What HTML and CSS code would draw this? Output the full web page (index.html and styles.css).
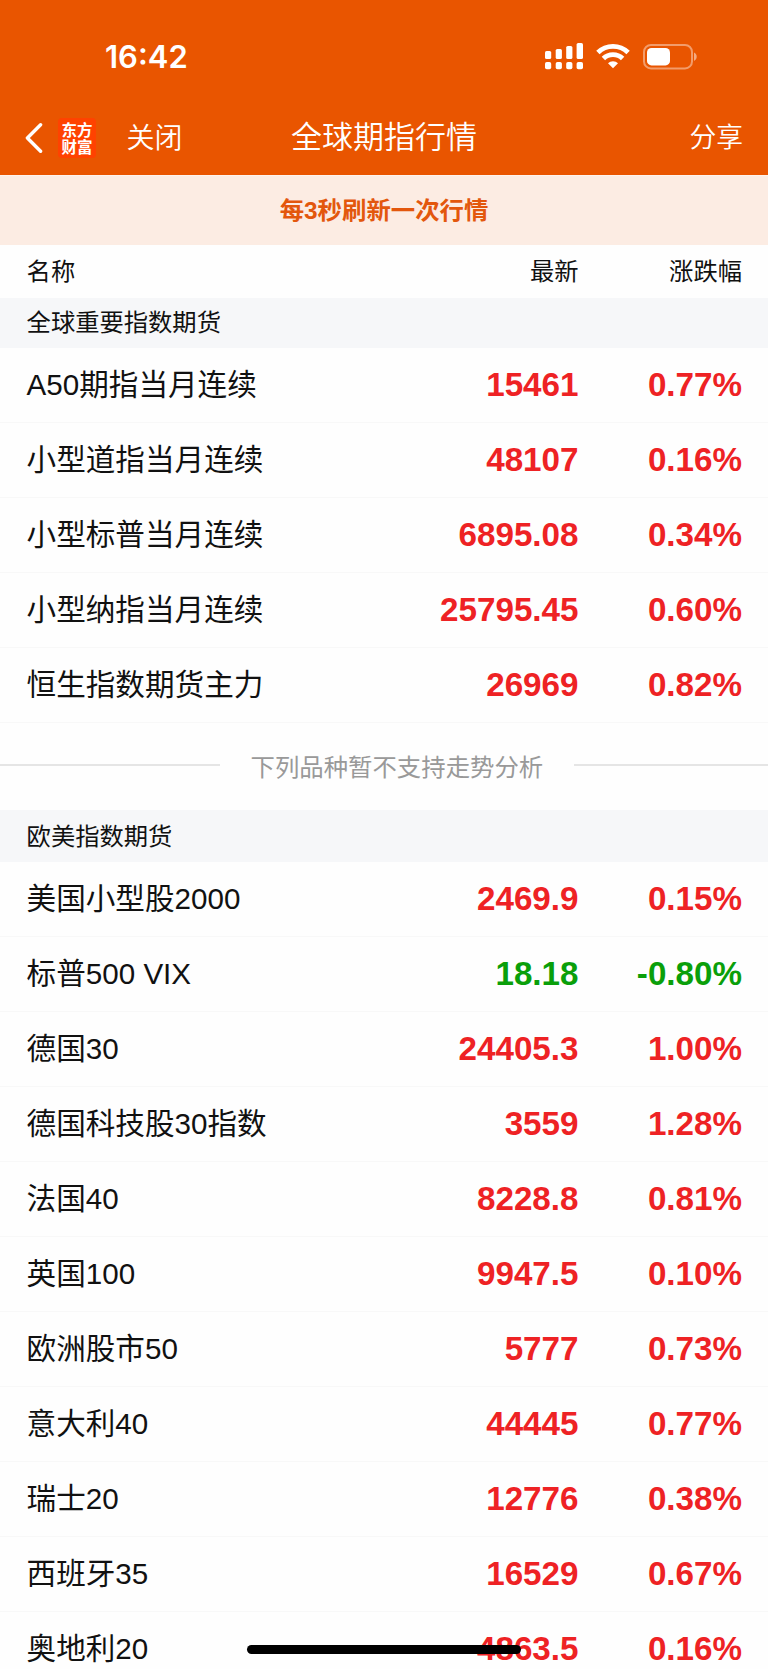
FILE: index.html
```html
<!DOCTYPE html>
<html lang="zh-CN">
<head>
    <meta charset="UTF-8">
    <meta name="viewport" content="width=device-width, initial-scale=1.0">
    <title>全球期指行情</title>
    <link rel="stylesheet" href="styles.css">
</head>
<body>
    <div class="page">
        <header class="header">
            <div class="status-bar">
                <div class="time">16:42</div>
                <div class="status-icons">
                    <svg class="signal" width="40" height="28" viewBox="0 0 40 28" fill="#fff">
                        <rect x="1" y="9" width="6.2" height="8" rx="1.6"/>
                        <rect x="11.7" y="7" width="6.2" height="10" rx="1.6"/>
                        <rect x="22.2" y="4" width="6.2" height="13" rx="1.6"/>
                        <rect x="32.6" y="1" width="6.4" height="16" rx="1.6"/>
                        <rect x="1" y="20" width="6.2" height="7.3" rx="1.8"/>
                        <rect x="11.7" y="20" width="6.2" height="7.3" rx="1.8"/>
                        <rect x="22.2" y="20" width="6.2" height="7.3" rx="1.8"/>
                        <rect x="32.6" y="20" width="6.4" height="7.3" rx="1.8"/>
                    </svg>
                    <svg class="wifi" width="34" height="26" viewBox="0 0 34 26">
                        <g fill="none" stroke="#fff" stroke-width="4.8">
                            <path d="M1.9 9.5a21.6 21.6 0 0 1 30.2 0"/>
                            <path d="M7.4 15.5a13.6 13.6 0 0 1 19.2 0"/>
                        </g>
                        <path d="M17 25.2l-5-4.9a7 7 0 0 1 10 0z" fill="#fff"/>
                    </svg>
                    <svg class="battery" width="55" height="26" viewBox="0 0 55 26">
                        <rect x="1" y="1" width="48" height="23.4" rx="7" fill="none" stroke="#fff" stroke-opacity=".42" stroke-width="2"/>
                        <rect x="4" y="4" width="23" height="17.4" rx="4.5" fill="#fff"/>
                        <path d="M51 8.6c3.6 1.3 3.6 7 0 8.3z" fill="#fff" fill-opacity=".5"/>
                    </svg>
                </div>
            </div>
            <nav class="nav">
                <div class="nav-left">
                    <svg class="back" width="18" height="30" viewBox="0 0 18 30">
                        <path d="M15.6 1.8L2.4 15l13.2 13.2" fill="none" stroke="#fff" stroke-width="3.4" stroke-linecap="round" stroke-linejoin="round"/>
                    </svg>
                    <div class="logo">东方财富</div>
                    <span class="close">关闭</span>
                </div>
                <h1 class="title">全球期指行情</h1>
                <span class="share">分享</span>
            </nav>
        </header>

        <div class="notice">每3秒刷新一次行情</div>

        <div class="columns">
            <span>名称</span>
            <span class="price">最新</span>
            <span class="change">涨跌幅</span>
        </div>

        <div class="section-title">全球重要指数期货</div>
        <div class="row up"><span>A50期指当月连续</span><b class="price">15461</b><b class="change">0.77%</b></div>
        <div class="row up"><span>小型道指当月连续</span><b class="price">48107</b><b class="change">0.16%</b></div>
        <div class="row up"><span>小型标普当月连续</span><b class="price">6895.08</b><b class="change">0.34%</b></div>
        <div class="row up"><span>小型纳指当月连续</span><b class="price">25795.45</b><b class="change">0.60%</b></div>
        <div class="row up"><span>恒生指数期货主力</span><b class="price">26969</b><b class="change">0.82%</b></div>

        <div class="divider"><span>下列品种暂不支持走势分析</span></div>

        <div class="section-title section-europe">欧美指数期货</div>
        <div class="row up"><span>美国小型股2000</span><b class="price">2469.9</b><b class="change">0.15%</b></div>
        <div class="row down"><span>标普500 VIX</span><b class="price">18.18</b><b class="change">-0.80%</b></div>
        <div class="row up"><span>德国30</span><b class="price">24405.3</b><b class="change">1.00%</b></div>
        <div class="row up"><span>德国科技股30指数</span><b class="price">3559</b><b class="change">1.28%</b></div>
        <div class="row up"><span>法国40</span><b class="price">8228.8</b><b class="change">0.81%</b></div>
        <div class="row up"><span>英国100</span><b class="price">9947.5</b><b class="change">0.10%</b></div>
        <div class="row up"><span>欧洲股市50</span><b class="price">5777</b><b class="change">0.73%</b></div>
        <div class="row up"><span>意大利40</span><b class="price">44445</b><b class="change">0.77%</b></div>
        <div class="row up"><span>瑞士20</span><b class="price">12776</b><b class="change">0.38%</b></div>
        <div class="row up"><span>西班牙35</span><b class="price">16529</b><b class="change">0.67%</b></div>
        <div class="row up"><span>奥地利20</span><b class="price">4863.5</b><b class="change">0.16%</b></div>

        <div class="home-indicator"></div>
    </div>
</body>
</html>
```
FILE: styles.css
```css
* {
    margin: 0;
    padding: 0;
    box-sizing: border-box;
}

body {
    font-family: "Liberation Sans", "Noto Sans CJK SC", sans-serif;
    background: #fefefe;
    color: #111;
}

.page {
    position: relative;
    height: 1669px;
    overflow: hidden;
}

/* 顶部 */
.header {
    height: 175px;
    background: #e95500;
    color: #fff;
}

.status-bar {
    display: flex;
    justify-content: space-between;
    height: 100px;
    padding: 37px 70px 0 105px;
}

.time {
    font-family: Inter, sans-serif;
    font-size: 31px;
    font-weight: 600;
    line-height: 40px;
}

.status-icons {
    display: flex;
    align-items: flex-start;
    padding-top: 5px;
}

.wifi {
    margin: 1px 13px 0 12px;
}

.battery {
    margin-top: 2px;
}

.nav {
    display: grid;
    grid-template-columns: 1fr auto 1fr;
    align-items: center;
    height: 75px;
    padding: 0 25px 0 25px;
    font-family: "Noto Sans CJK SC", sans-serif;
    font-weight: 350;
}

.nav-left {
    display: flex;
    align-items: center;
    height: 74px;
}

.logo {
    width: 38px;
    height: 40px;
    margin: 0 30.5px 0 15px;
    padding: 3px 3px 3px 3.5px;
    border-radius: 4px;
    background: #ff4200;
    font-size: 15.5px;
    font-weight: 700;
    line-height: 17px;
}

.close,
.title,
.share {
    padding-bottom: 3px;
    line-height: 40px;
}

.close {
    font-size: 28px;
}

.title {
    padding-bottom: 5px;
    font-size: 31px;
    font-weight: 350;
}

.share {
    font-size: 26.8px;
    text-align: right;
}

.notice {
    height: 70px;
    border-top: 1px solid #fff3ec;
    background: #fcece3;
    color: #e3570d;
    font-size: 24.4px;
    font-weight: 700;
    line-height: 70px;
    text-align: center;
}

/* 行情列表 */
.columns,
.row {
    display: grid;
    grid-template-columns: 1fr 190px 163.5px;
    align-items: center;
    padding: 0 26px 0 26.6px;
}

.columns {
    height: 53px;
    padding-bottom: 4px;
    font-size: 24.3px;
}

.price,
.change {
    text-align: right;
}

.section-title {
    height: 50px;
    padding-left: 26.6px;
    background: #f6f7f9;
    font-size: 24.3px;
    line-height: 49px;
}

.section-europe {
    height: 52px;
    line-height: 53px;
}

.row {
    height: 75px;
    border-bottom: 1px solid #f8f8f8;
    font-size: 29.6px;
}

.row span {
    padding-bottom: 5px;
}

.row b {
    font-size: 33.2px;
}

.up b {
    color: #ee2224;
}

.down b {
    color: #0a9f0a;
}

.divider {
    display: grid;
    grid-template-columns: 220px 1fr 194px;
    align-items: center;
    height: 87px;
    padding-bottom: 3px;
    color: #999;
    font-size: 24.4px;
}

.divider span {
    padding-left: 30.5px;
    white-space: nowrap;
}

.divider::before,
.divider::after {
    content: "";
    height: 2px;
    background: #e5e5e5;
}

.home-indicator {
    position: absolute;
    left: 247px;
    bottom: 15px;
    width: 274px;
    height: 9px;
    border-radius: 5px;
    background: #000;
}
```
